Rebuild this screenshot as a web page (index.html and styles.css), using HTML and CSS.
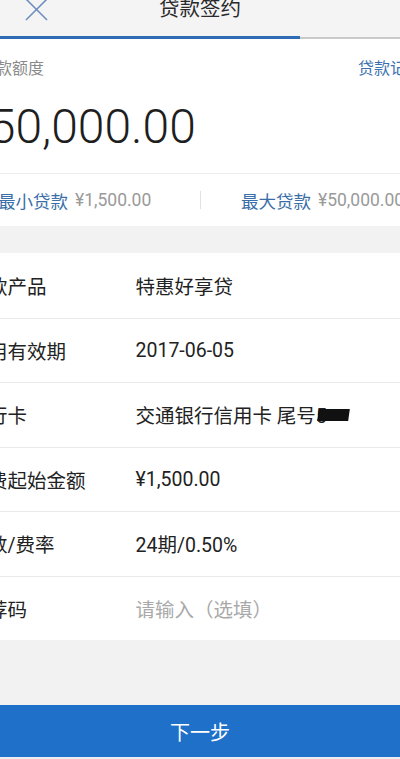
FILE: index.html
```html
<!DOCTYPE html>
<html lang="zh-CN">
<head>
<meta charset="utf-8">
<title>贷款签约</title>
<link rel="stylesheet" href="styles.css">
</head>
<body>
<div class="page">
  <header class="topbar">
    <div class="topbar-left">
      <svg class="close" width="24" height="24" viewBox="0 0 24 24" aria-hidden="true">
        <path d="M1 1 L23 23 M23 1 L1 23" stroke="#6b8dbf" stroke-width="1.6" fill="none"/>
      </svg>
    </div>
    <h1 class="title">贷款签约</h1>
    <div class="topbar-right"></div>
  </header>
  <div class="progress"><div class="progress-fill"></div></div>

  <section class="quota">
    <div class="quota-head">
      <span class="quota-label">贷款额度</span>
      <span class="quota-link">贷款记录</span>
    </div>
    <div class="quota-amount">¥50,000.00</div>
    <div class="quota-range">
      <div class="range range-min"><span class="range-label">最小贷款</span><span class="range-value">¥1,500.00</span></div>
      <div class="range range-max"><span class="range-label">最大贷款</span><span class="range-value">¥50,000.00</span></div>
    </div>
  </section>

  <section class="details">
    <div class="row"><span class="row-label">贷款产品</span><span class="row-value">特惠好享贷</span></div>
    <div class="row"><span class="row-label">信用有效期</span><span class="row-value">2017-06-05</span></div>
    <div class="row"><span class="row-label">银行卡</span><span class="row-value">交通银行信用卡 尾号<span class="masked">5<span class="mask"></span></span></span></div>
    <div class="row"><span class="row-label">计费起始金额</span><span class="row-value">¥1,500.00</span></div>
    <div class="row"><span class="row-label">期数/费率</span><span class="row-value">24期/0.50%</span></div>
    <div class="row"><span class="row-label">推荐码</span><span class="row-value placeholder">请输入（选填）</span></div>
  </section>

  <div class="spacer"></div>
  <button class="next">下一步</button>
  <div class="bottom-strip"></div>
</div>
</body>
</html>
```

FILE: styles.css
```css
* { box-sizing: border-box; margin: 0; padding: 0; }

html, body {
  width: 400px;
  height: 759px;
  overflow: hidden;
  background: #f2f2f2;
}

body {
  font-family: Roboto, "Noto Sans CJK SC", sans-serif;
  color: #222;
}

.page {
  width: 400px;
  height: 759px;
  overflow: hidden;
  display: flex;
  flex-direction: column;
}

.topbar {
  height: 54px;
  margin-top: -18px;
  flex: none;
  background: #f4f4f5;
  display: grid;
  grid-template-columns: 1fr auto 1fr;
  align-items: center;
}

.topbar-left {
  padding-left: 25px;
  display: flex;
  align-items: center;
}

.close { display: block; width: 23px; height: 23px; }

.title {
  font-size: 20.5px;
  font-weight: 400;
  color: #2a2a2a;
  line-height: 1;
}

.progress {
  height: 3px;
  flex: none;
  background: linear-gradient(to bottom, #f4f4f5 0, #f4f4f5 1px, #c9c9c9 1px);
  display: flex;
}

.progress-fill {
  width: 300px;
  height: 3px;
  background: #2e6cb6;
}

.quota {
  flex: none;
  background: #fff;
  height: 187px;
  display: flex;
  flex-direction: column;
  overflow: hidden;
}

.quota-head {
  height: 56px;
  display: flex;
  justify-content: space-between;
  align-items: center;
  font-size: 16px;
}

.quota-label {
  color: #8a8a8a;
  margin-left: -20px;
  white-space: nowrap;
}

.quota-link {
  color: #3b72ae;
  white-space: nowrap;
  margin-right: -22px;
}

.quota-amount {
  font-size: 48px;
  font-weight: 300;
  line-height: 48px;
  color: #1e1e1e;
  padding-top: 8px;
  height: 79px;
  margin-left: -36px;
  white-space: nowrap;
  border-bottom: 1px solid #ededed;
}

.quota-range {
  flex: 1;
  display: grid;
  grid-template-columns: 200px 200px;
  align-items: center;
}

.range {
  display: flex;
  align-items: center;
  gap: 7px;
  white-space: nowrap;
  font-size: 17.5px;
  height: 18px;
}

.range-min { margin-left: -2px; }

.range-max {
  border-left: 1px solid #e2e2e2;
  padding-left: 40px;
}

.range-label { color: #3a6ea8; }

.range-value { color: #9a9a9a; font-size: 17.5px; }

.details {
  margin-top: 27px;
  flex: none;
  background: #fff;
}

.row {
  height: 64.5px;
  display: grid;
  grid-template-columns: 167px 1fr;
  align-items: center;
  margin-left: -31.5px;
  font-size: 19.5px;
  white-space: nowrap;
  border-top: 1px solid #e9e9e9;
}

.row:first-child { border-top: none; }

.row-label { color: #222; }

.row-value { color: #222; }

.placeholder { color: #a9a9a9; }

.masked {
  position: relative;
  display: inline-block;
}

.mask {
  position: absolute;
  left: 2px;
  top: 4px;
  width: 31px;
  height: 12px;
  background: #111;
  transform: skewX(-8deg);
}

.spacer {
  height: 65px;
  flex: none;
}

.next {
  height: 52px;
  flex: none;
  border: none;
  background: #1f70c9;
  color: #fff;
  font-family: "Noto Sans CJK SC", sans-serif;
  font-size: 20px;
  width: 400px;
}

.bottom-strip {
  height: 2px;
  flex: none;
  background: #e9eef4;
}
```
